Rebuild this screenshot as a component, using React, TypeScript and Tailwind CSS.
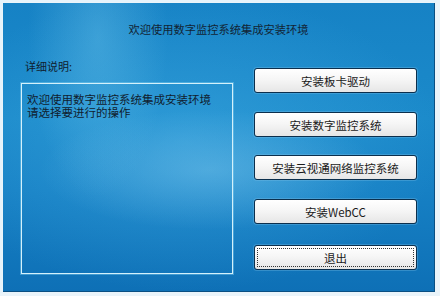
import React from 'react';

const font = { fontFamily: '"Noto Sans CJK SC", "DejaVu Sans", sans-serif' };

const buttons = [
  { label: '安装板卡驱动', mt: 'mt-[8px]' },
  { label: '安装数字监控系统', mt: 'mt-[19px]' },
  { label: '安装云视通网络监控系统', mt: 'mt-[18px]' },
  { label: '安装WebCC', mt: 'mt-[19px]' },
  { label: '退出', mt: 'mt-[21px]', isDefault: true },
];

const SetupButton: React.FC<{ label: string; mt: string; isDefault?: boolean }> = ({ label, mt, isDefault }) => (
  <button
    className={`${mt} h-[25px] w-[163px] rounded-[3px] border border-[#0b2f4d] bg-[linear-gradient(180deg,#ffffff_0%,#f6f6f6_45%,#e6e6e6_100%)] p-[2px] text-[11.5px] leading-[12px] text-[#1a1a1a] shadow-[0_0_0_1px_rgba(120,190,230,0.35)]`}
  >
    <span
      className={`flex h-full w-full items-center justify-center ${isDefault ? 'border border-dotted border-[#333]' : ''}`}
    >
      {label}
    </span>
  </button>
);

export default function App() {
  return (
    <div style={font} className="h-[296px] w-[440px] overflow-hidden bg-[#eaf4fa]">
      <div className="h-[293px] w-[437px] border-l-[2px] border-t-[2px] border-[#e6f3fb] pl-[1px] pt-[1px]">
        <div className="flex h-[289px] w-[432px] flex-col border-b border-r border-[#0a4f82] bg-[radial-gradient(ellipse_70px_160px_at_22%_12%,rgba(120,205,240,0.35),transparent),radial-gradient(ellipse_170px_60px_at_48%_58%,rgba(150,215,245,0.35),transparent),radial-gradient(ellipse_260px_150px_at_42%_48%,rgba(70,175,230,0.45),transparent),linear-gradient(180deg,#1682c5_0%,#1b8aca_40%,#1680c4_65%,#0e70b6_100%)]">
          {/* Title */}
          <div className="h-[57px] pt-[20px] text-center text-[11.25px] leading-[12px] text-[#122434]">
            欢迎使用数字监控系统集成安装环境
          </div>

          <div className="flex pl-[18px]">
            {/* Left: description */}
            <div className="flex flex-col">
              <div className="pl-[4px] text-[11px] leading-[12px] text-[#10202e]">详细说明:</div>
              <div className="mt-[11px] h-[191px] w-[212px] border-[1.5px] border-[#d4f1fb] pl-[5px] pt-[9px] text-[11.5px] leading-[13px] text-[#10202e] shadow-[0_0_0_1px_rgba(140,215,245,0.4)]">
                <div>欢迎使用数字监控系统集成安装环境</div>
                <div>请选择要进行的操作</div>
              </div>
            </div>

            {/* Right: actions */}
            <div className="ml-[21px] flex flex-col">
              {buttons.map((b) => (
                <SetupButton key={b.label} {...b} />
              ))}
            </div>
          </div>
        </div>
      </div>
    </div>
  );
}
